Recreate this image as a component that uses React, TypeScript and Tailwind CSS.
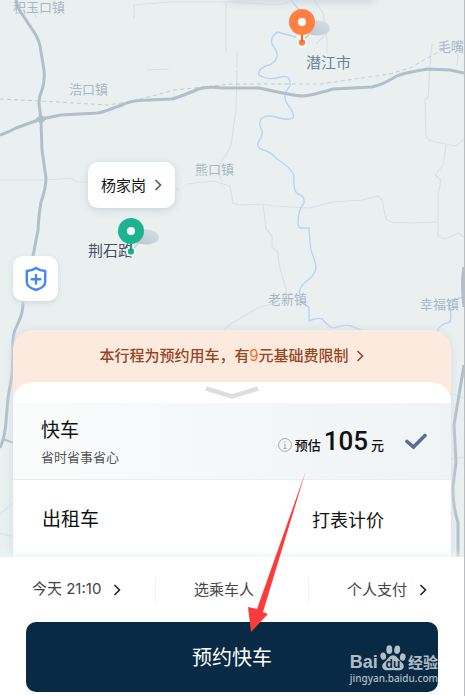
import React from "react";

const LABELS = [
  { text: "积玉口镇", x: 13, y: 12, size: 13, color: "#a9b6c6" },
  { text: "浩口镇", x: 69, y: 94, size: 13, color: "#a9b6c6" },
  { text: "毛嘴镇", x: 438, y: 51, size: 13, color: "#a9b6c6" },
  { text: "熊口镇", x: 195, y: 174, size: 13, color: "#a9b6c6" },
  { text: "老新镇", x: 268, y: 304, size: 13, color: "#a9b6c6" },
  { text: "幸福镇", x: 420, y: 309, size: 13, color: "#a9b6c6" },
  { text: "潜江市", x: 306, y: 68, size: 15, color: "#6f8097" },
  { text: "荆石路", x: 88, y: 256, size: 15, color: "#465264" },
];

const Chevron = ({ className }: { className: string }) => (
  <svg viewBox="0 0 8 12" fill="none" className={className} aria-hidden="true">
    <path d="M1.5 1 6.5 6 1.5 11" stroke="currentColor" strokeWidth="1.6" />
  </svg>
);

const Pin = ({ x, y, color }: { x: number; y: number; color: string }) => (
  <g transform={`translate(${x} ${y})`}>
    <path d="M0 20 L12 7" stroke="#c3cdd4" strokeWidth="1.5" />
    <ellipse cx="15" cy="6" rx="13" ry="7.5" fill="url(#pinShade)" />
    <circle cy="20.5" r="5" fill="#fff" />
    <circle cy="20.5" r="3.2" fill={color} />
    <path d="M0 10V20" stroke={color} strokeWidth="2" />
    <path d="M0 12V20" stroke="#000" strokeOpacity="0.2" strokeWidth="1.5" />
    <circle r="13" fill={color} />
    <circle r="4" fill="#fff" />
  </g>
);

const CityMap = () => (
  <svg
    viewBox="0 0 464 696"
    preserveAspectRatio="xMidYMin slice"
    className="absolute inset-0 h-full w-full"
    fill="none"
    strokeLinejoin="round"
  >
    <defs>
      <linearGradient id="pinShade" x1="0" x2="1" y1="1" y2="0">
        <stop offset="0" stopColor="#b9c4cc" />
        <stop offset="1" stopColor="#d8e0e4" />
      </linearGradient>
    </defs>

    {/* small roads */}
    <g stroke="#d9dfe8" strokeWidth="1.2">
      <path d="M134 19V5L170 2 232 2 279 5 288 2" />
      <path d="M226 2V52M147 70 169 69M33 9 36 18" />
      <path d="M237 52V68M237 70 236 110 232 138Q232 148 222 160L218 169 222 182" />
      <path d="M314 0 323 13 327 38 327 53M327 33 316 44" />
      <path d="M432 44 430 65 428 98 425 99 426 137 431 141 456 146 464 139M446 145 443 165 435 175 441 180 438 195 438 236 444 239 452 236 458 233 464 237" />
      <path d="M455 51 458 55 457 66" />
      <path d="M0 180 46 180 71 178 77 182 170 183 179 190M187 184 213 181 230 186 233 203 240 205 262 204 273 206 310 208 332 202 362 200 378 196 382 200 386 219 391 222 410 223 437 222" />
      <path d="M263 204 266 229 272 236 272 247 278 253 279 264 287 294M277 303 260 307 232 323 224 330" />
      <path d="M0 514 13 503M0 533 13 537M451 393 464 398M451 459 464 457" />
    </g>

    <path
      d="M0 99 40 101 108 105 133 101 175 90 232 84 260 84 320 84 390 74 410 68 440 51 452 47"
      stroke="#c6cccf"
      strokeDasharray="4 3"
    />

    {/* river */}
    <path
      d="M291 0 301 12M296 37Q281 33 278 32 270 36 272 44 278 52 277 57 275 64 266 66 257 70 259 75 268 81 281 77 291 74 290 86 281 96 288 105 295 114 293 118 289 121 276 117 258 113 260 126 265 134 259 141 255 147 263 150 270 151 277 159 294 170 294 177 293 191 298 194 305 196 304 203 298 210 298 222 298 228 301 228L309 228Q310 246 311 250 316 263 316 269 313 277 308 280 297 288 300 297 300 303 309 307L309 321Q317 317 322 319 330 328 334 328 345 324 351 326L361 330"
      stroke="#b7d3fb"
      strokeWidth="1.4"
    />
    <path
      d="M464 297Q448 300 449 306 452 314 450 322 438 325 438 331"
      stroke="#b7d3fb"
      strokeWidth="1.4"
    />

    {/* highways */}
    <g stroke="#b1bfca" strokeWidth="3">
      <path d="M16 0Q17 7 22 14L34 32Q40 41 41 52L44 70Q45 82 42 90 39 96 39 103L41 120 42 150 46 178Q46 188 41 202 39 213 38 230L33 256 23 302Q23 313 19 321L15 330Q12 338 13 352L12 375 8 398 6 422Q5 437 0 448" />
      <path d="M3 439 14 443" strokeWidth="2" />
      <path d="M0 135 8 132 16 128 41 119 61 115 98 113Q104 112 124 104 133 100 149 100L172 99Q177 98 196 90 206 86 222 88L259 88Q295 96 302 96 310 96 333 89L372 87Q382 85 395 77 402 73 428 69L450 70 464 73" />
      <path d="M464 267Q461 282 464 307M464 365 454 425 456 463 453 485Q452 502 458 523L458 560" />
      <path d="M41 115 46 119 41 124 36 119Z" fill="#b1bfca" strokeWidth="1" />
    </g>

    {LABELS.map((label) => (
      <text
        key={label.text}
        x={label.x}
        y={label.y}
        fontSize={label.size}
        fill={label.color}
      >
        {label.text}
      </text>
    ))}

    <Pin x={302} y={22} color="#ff8040" />
    <Pin x={131} y={231} color="#1db391" />
  </svg>
);

const Watermark = () => (
  <div className="pointer-events-none absolute right-[26px] bottom-3 flex flex-col text-white/70">
    <div className="flex items-end justify-between">
      <span className="font-['Liberation_Sans',sans-serif] text-lg leading-5 font-bold">
        Bai
      </span>
      <span className="relative h-7 w-[26px]">
        <svg viewBox="0 0 28 28" className="h-7 w-[26px]" fill="currentColor">
          <ellipse cx="3.500" cy="12" rx="3" ry="4" transform="rotate(-12 3.500 12)" />
          <ellipse cx="10" cy="5" rx="3.2" ry="4.600" />
          <ellipse cx="18.500" cy="5" rx="3.200" ry="4.600" transform="rotate(8 18.500 5)" />
          <ellipse cx="24.500" cy="13" rx="3" ry="4" transform="rotate(12 24.500 13)" />
          <path d="M14 11C10 11 9 15 6 17.5 3 20 1.500 22 3 25 5 28.500 10 27 14 27S23 28.500 25 25C26.500 22 25 20 22 17.500 19 15 18 11 14 11Z" />
        </svg>
        <span className="absolute inset-x-0 bottom-0 text-center font-['Liberation_Sans',sans-serif] text-xs leading-4 font-bold text-[#082a45]">
          du
        </span>
      </span>
      <span className="text-[15px] leading-5 font-bold">经验</span>
    </div>
    <span className="font-['Noto_Sans',sans-serif] text-[10px] leading-3 font-medium">
      jingyan.baidu.com
    </span>
  </div>
);

const App = () => {
  return (
    <main className="relative flex min-h-screen flex-col overflow-hidden border-r border-[#b9bdbf] bg-[#eaf0f0] font-['Noto_Sans_CJK_SC',sans-serif] text-[#111]">
      <CityMap />
      <div className="absolute -top-2 left-[228px] h-2 w-[147px] rounded-lg shadow-[0_2px_8px_#c9d2d8]"></div>

      <button className="absolute top-[162px] left-[88px] flex h-[46px] w-[87px] items-center justify-center gap-2 rounded-[10px] bg-white text-[15px] shadow-[0_2px_8px_#c9d3d8]">
        杨家岗
        <Chevron className="h-3 w-2 text-[#555]" />
      </button>
      <button
        aria-label="安全中心"
        className="absolute top-64 left-[13px] flex h-[45px] w-[45px] items-center justify-center rounded-[10px] bg-white shadow-[0_2px_6px_#d0d9dd]"
      >
        <svg viewBox="0 0 22 26" className="h-[26px] w-[22px]" fill="none" stroke="#4387f7" strokeWidth="2.4" strokeLinejoin="round">
          <path d="M11 2C8.500 3.800 5.500 5 1.800 5V16C1.800 20 6 22.500 11 24 16 22.500 20.200 20 20.200 16V5C16.500 5 13.500 3.800 11 2Z" />
          <path d="M11 9V17.500M6.700 13.200H15.300" strokeLinecap="round" />
        </svg>
      </button>

      <section className="relative mx-[13px] mt-auto rounded-t-[20px] bg-[#fdeadf] shadow-[0_0_10px_#d3dcdf]">
        <a
          href="#rule"
          className="flex h-[52px] items-center justify-center gap-2 text-[15px] font-medium text-[#97451f]"
        >
          <span>
            本行程为预约用车，有
            <span className="font-['Liberation_Sans',sans-serif] text-base text-[#ff6a22]">9</span>
            元基础费限制
          </span>
          <Chevron className="h-3 w-2" />
        </a>
        <div className="rounded-t-[20px] bg-white">
          <div className="flex h-[21px] items-start justify-center pt-1">
            <svg viewBox="0 0 56 14" className="h-[14px] w-14" fill="none">
              <path d="M2 2.500 28 10.500 54 2.500" stroke="#dedede" strokeWidth="4.500" />
            </svg>
          </div>
          <div className="flex h-[77px] items-center border-b border-[#e9eef0] bg-linear-to-r from-[#fafcfc] to-[#eff3f4] pr-6 pl-7">
            <div className="flex flex-col gap-1">
              <h2 className="text-[19px] leading-7">快车</h2>
              <p className="text-[13px] leading-5 text-[#555]">省时省事省心</p>
            </div>
            <div className="ml-auto flex items-baseline gap-[3px] text-[13px] font-medium">
              <svg viewBox="0 0 14 14" className="h-[14px] w-[14px] translate-y-1 self-center" fill="none" stroke="#aaa">
                <circle cx="7" cy="7" r="6.400" />
                <path d="M7 6V10.500M7 3.300V4.700M6 6.300H7M5.500 10.500H8.500" />
              </svg>
              <span>预估</span>
              <span className="font-['Roboto',sans-serif] text-[26px] leading-8 font-medium">
                105
              </span>
              <span>元</span>
            </div>
            <svg viewBox="0 0 22 17" className="ml-[21px] h-[17px] w-[22px]" fill="none">
              <path d="M2 8.500 8.500 14 20 2.500" stroke="#5a6b95" strokeWidth="3.600" strokeLinecap="round" />
            </svg>
          </div>
          <div className="flex h-[77px] items-center justify-between pr-[67px] pl-[29px]">
            <h2 className="text-[19px]">出租车</h2>
            <span className="text-lg">打表计价</span>
          </div>
        </div>
      </section>

      <footer className="relative bg-white px-[26px] pb-1 shadow-[0_-2px_8px_#eef3f5]">
        <div className="grid h-[65px] grid-cols-[5fr_6fr_5fr] items-center text-[15px] text-[#444]">
          <button className="flex items-center gap-3 pl-[6px]">
            <span className="font-['Inter','Noto_Sans_CJK_SC',sans-serif]">今天 21:10</span>
            <Chevron className="h-3 w-2 text-[#222]" />
          </button>
          <button className="h-6 border-x border-[#f0f0f0] pr-4">选乘车人</button>
          <button className="flex items-center justify-end gap-3 pr-[11px]">
            个人支付
            <Chevron className="h-3 w-2 text-[#222]" />
          </button>
        </div>
        <button className="block h-[70px] w-full rounded-[10px] bg-[#082a45] text-xl text-white">
          预约快车
        </button>
        <Watermark />
      </footer>

      <svg
        viewBox="0 0 58 160"
        className="pointer-events-none absolute bottom-16 left-[248px] h-40 w-[58px]"
        fill="#fd3b3b"
      >
        <path d="M57.500 0 15 140 20 142 3 160 0 135 9 137Z" />
      </svg>
    </main>
  );
};

export default App;
